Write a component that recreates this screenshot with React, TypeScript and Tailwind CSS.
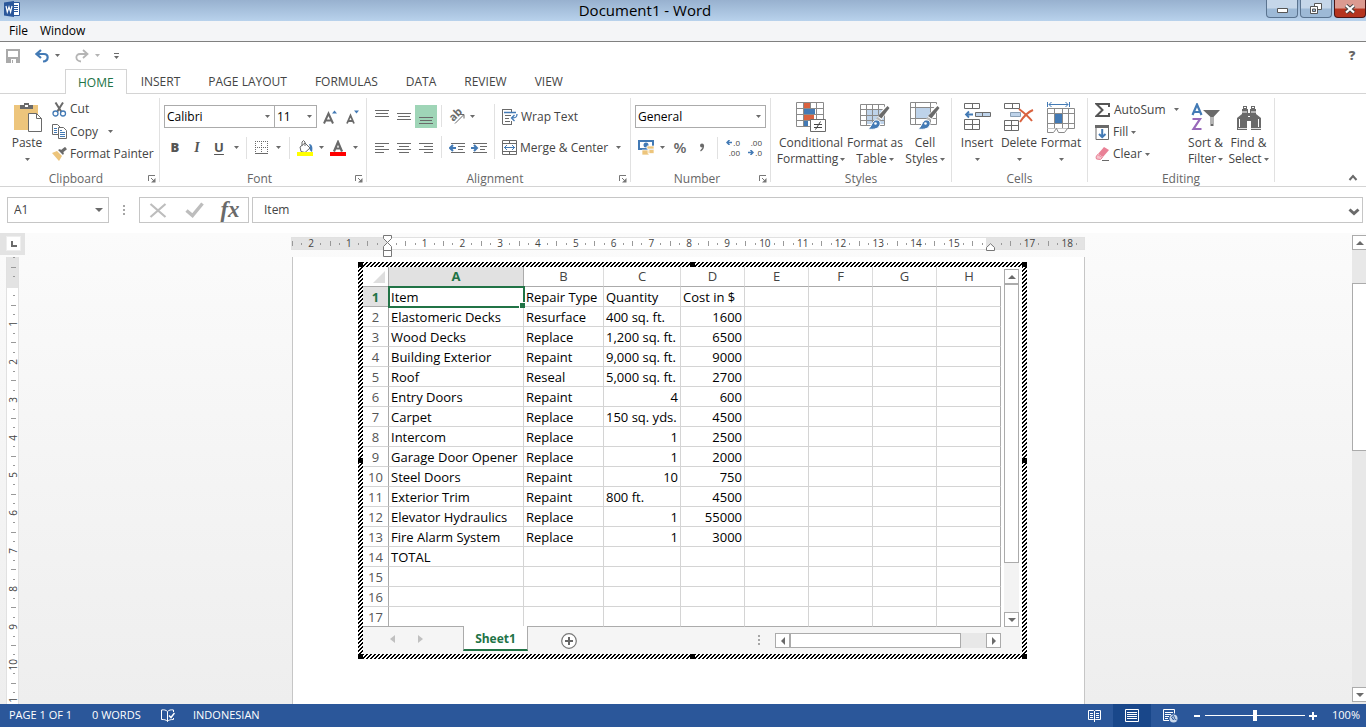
import type { ReactNode } from "react";

const columns = ["A", "B", "C", "D", "E", "F", "G", "H"];

const rows: (string | number)[][] = [
  ["Item", "Repair Type", "Quantity", "Cost in $"],
  ["Elastomeric Decks", "Resurface", "400 sq. ft.", 1600],
  ["Wood Decks", "Replace", "1,200 sq. ft.", 6500],
  ["Building Exterior", "Repaint", "9,000 sq. ft.", 9000],
  ["Roof", "Reseal", "5,000 sq. ft.", 2700],
  ["Entry Doors", "Repaint", 4, 600],
  ["Carpet", "Replace", "150 sq. yds.", 4500],
  ["Intercom", "Replace", 1, 2500],
  ["Garage Door Opener", "Replace", 1, 2000],
  ["Steel Doors", "Repaint", 10, 750],
  ["Exterior Trim", "Repaint", "800 ft.", 4500],
  ["Elevator Hydraulics", "Replace", 1, 55000],
  ["Fire Alarm System", "Replace", 1, 3000],
  ["TOTAL"],
  [],
  [],
  [],
];

const tabs = ["HOME", "INSERT", "PAGE LAYOUT", "FORMULAS", "DATA", "REVIEW", "VIEW"];

function Icon({ w, h, children }: { w: number; h: number; children: ReactNode }) {
  return (
    <svg width={w} height={h} viewBox={`0 0 ${w} ${h}`} fill="none" className="shrink-0" aria-hidden="true">
      {children}
    </svg>
  );
}

function Caret() {
  return (
    <Icon w={5} h={3}>
      <path d="M0 0h5L2.5 3z" fill="#6a6a6a" />
    </Icon>
  );
}

function CaretButton({ label, className }: { label: string; className: string }) {
  return (
    <button type="button" aria-label={label} className={`flex h-[23px] items-center justify-center ${className}`}>
      <Caret />
    </button>
  );
}

function Lines({ items }: { items: [number, number, number][] }) {
  return (
    <Icon w={14} h={14}>
      {items.map(([x, y, w]) => (
        <rect key={y} x={x} y={y} width={w} height={1} fill="#6a6a6a" />
      ))}
    </Icon>
  );
}

function Divider({ className }: { className: string }) {
  return <span className={`w-px shrink-0 bg-[#e1e1e1] ${className}`} />;
}

function Tool({ label, className, children }: { label: string; className: string; children: ReactNode }) {
  return (
    <button type="button" aria-label={label} className={`flex h-[23px] shrink-0 items-center justify-center ${className}`}>
      {children}
    </button>
  );
}

function Group({
  label,
  className,
  launcher,
  children,
}: {
  label: string;
  className: string;
  launcher?: boolean;
  children: ReactNode;
}) {
  return (
    <section className={`flex h-[84px] shrink-0 flex-col border-r border-[#e1e1e1] ${className}`}>
      <div className="flex h-[76px] items-start">{children}</div>
      <div className="flex h-2 items-start text-[#666]">
        <span className={launcher ? "flex-1 pl-1 text-center leading-[10px]" : "flex-1 text-center leading-[10px]"}>{label}</span>
        {launcher && (
          <button type="button" aria-label={`${label} settings`} className="mr-[3px] pt-px">
            <Icon w={8} h={8}>
              <path d="M0.5 6V0.5H7M3 3l3 3" stroke="#777" />
              <path d="M7.500 3v4.500H3z" fill="#777" />
            </Icon>
          </button>
        )}
      </div>
    </section>
  );
}

function BigButton({ icon, lines, caret, className }: { icon: ReactNode; lines: string[]; caret?: boolean; className: string }) {
  return (
    <button type="button" className={`flex shrink-0 flex-col items-center pt-1 whitespace-nowrap ${className}`}>
      <span className="mb-[3px] flex h-[30px] items-center">{icon}</span>
      <span className="leading-4">{lines[0]}</span>
      <span className="flex h-4 items-center gap-[2px] leading-4">
        {lines[1]}
        {caret !== false && <Caret />}
      </span>
    </button>
  );
}

function Combo({ label, value, className }: { label: string; value: string; className: string }) {
  return (
    <span className={`relative flex h-[23px] items-center ${className}`}>
      <select
        aria-label={label}
        defaultValue={value}
        className="h-full w-full appearance-none border border-[#ababab] bg-white pl-[2px] text-black outline-none"
      >
        <option>{value}</option>
      </select>
      <span className="pointer-events-none absolute right-[5px]">
        <Caret />
      </span>
    </span>
  );
}

function Brush() {
  return (
    <>
      <path d="M28.500 3.500l-9 13" stroke="#fff" strokeWidth="5" />
      <path d="M29.500 6l-8 10.500-3.500-2.500 9.500-10z" fill="#6a6a6a" />
      <path d="M17.500 15l3.500 2.500-1.500 2-3.500-2.500z" fill="#b9b9b9" />
      <path d="M14.500 18.500c3-1.500 6.500.5 5.500 4-1 4-5.500 5.500-12 4.500 3-1 3.500-6.500 6.500-8.500z" fill="#437ab5" stroke="#fff" />
      <circle cx="15.500" cy="21.500" r="1.300" fill="#fff" />
    </>
  );
}

function ClipboardGroup() {
  return (
    <Group label="Clipboard" className="w-40" launcher>
      <BigButton
        className="ml-2 w-[38px]"
        lines={["Paste", ""]}
        icon={
          <Icon w={30} h={30}>
            <path d="M2 3h24v25H2z" fill="#edc57c" />
            <path d="M8 7V3h4V1h5v2h4v4z" fill="#6a6a6a" />
            <path d="M13 3h3v2h-3z" fill="#fff" />
            <path d="M16.500 11.500h8l5 5v13h-13z" fill="#fff" stroke="#6a6a6a" />
            <path d="M24.500 11.500v5h5" stroke="#6a6a6a" />
          </Icon>
        }
      />
      <div className="ml-[6px] flex flex-col">
        <button type="button" className="flex h-[22px] items-center gap-[3px]">
          <Icon w={15} h={15}>
            <path d="M3.500 0.500l6 9.500M11 0.500L5 10" stroke="#6a6a6a" strokeWidth="2" />
            <circle cx="3.500" cy="11.500" r="2.500" stroke="#437ab5" strokeWidth="1.300" />
            <circle cx="11" cy="11.500" r="2.500" stroke="#437ab5" strokeWidth="1.300" />
          </Icon>
          Cut
        </button>
        <span className="flex items-center">
          <button type="button" className="flex h-[22px] items-center gap-[3px]">
            <Icon w={15} h={15}>
              <path d="M.5 .5h5l3 3v7h-8z" fill="#fff" stroke="#6a6a6a" />
              <path d="M2 4.500h3M2 6.500h3M2 8.500h3" stroke="#437ab5" />
              <path d="M6.500 3.500h5l3 3v8h-8z" fill="#fff" stroke="#6a6a6a" />
              <path d="M8 8.500h5M8 10.500h5M8 12.500h5M8 6.500h2" stroke="#437ab5" />
            </Icon>
            Copy
          </button>
          <CaretButton label="Copy options" className="ml-1 w-4" />
        </span>
        <button type="button" className="flex h-[22px] items-center gap-[3px] whitespace-nowrap">
          <Icon w={15} h={14}>
            <path d="M0 6l5-2 5 5-3 5z" fill="#edc57c" />
            <path d="M6 3l5 5 1-2-4-4z" fill="#6a6a6a" />
            <path d="M9 5l5-4" stroke="#6a6a6a" strokeWidth="3" />
          </Icon>
          Format Painter
        </button>
      </div>
    </Group>
  );
}

function FontGroup() {
  return (
    <Group label="Font" className="w-[207px]" launcher>
      <div className="flex flex-col gap-2 pt-[7px] pl-1">
        <div className="flex">
          <Combo label="Font name" value="Calibri" className="w-[111px]" />
          <Combo label="Font size" value="11" className="-ml-px w-[43px]" />
          <Tool label="Increase font size" className="w-[26px]">
            <Icon w={15} h={14}>
              <path d="M1 13.500L5.500 3.500 10 13.500M2.500 10.500h6" stroke="#6a6a6a" strokeWidth="2" />
              <path d="M9 3.500L11.500 .5 14 3.500z" fill="#437ab5" />
            </Icon>
          </Tool>
          <Tool label="Decrease font size" className="w-5">
            <Icon w={14} h={14}>
              <path d="M1 13.500l3.500-8 3.500 8M2.500 11h4" stroke="#6a6a6a" strokeWidth="1.800" />
              <path d="M8 .5h5l-2.500 3z" fill="#437ab5" />
            </Icon>
          </Tool>
        </div>
        <div className="flex items-center text-[13px] text-[#555]">
          <Tool label="Bold" className="w-[22px] font-extrabold">
            B
          </Tool>
          <Tool label="Italic" className="w-[22px] font-['Liberation_Serif',serif] text-[14px] font-bold italic">
            I
          </Tool>
          <Tool label="Underline" className="w-[22px] font-bold underline underline-offset-2">
            U
          </Tool>
          <CaretButton label="Underline style" className="w-3" />
          <Divider className="mx-1 h-[22px]" />
          <Tool label="Borders" className="w-5">
            <Icon w={13} h={13}>
              <path d="M0 .5h13M0 6.500h13M.5 0v13M6.500 0v13M12.500 0v13" stroke="#6a6a6a" strokeDasharray="1 1" />
              <path d="M0 12.500h13" stroke="#6a6a6a" />
            </Icon>
          </Tool>
          <CaretButton label="Border style" className="w-[14px]" />
          <Divider className="mx-1 h-[22px]" />
          <Tool label="Fill colour" className="w-[22px]">
            <Icon w={16} h={16}>
              <path d="M3 7l5-4 5 5-5 4.500-4-1z" fill="#fff" stroke="#6a6a6a" />
              <path d="M5 6V2l1.500-1.500L8 2v4" stroke="#6a6a6a" />
              <path d="M12 4c3 0 4 3 3 8-2-1-3-3-2-5z" fill="#437ab5" />
              <path d="M0 12h16v4H0z" fill="#ff0" />
            </Icon>
          </Tool>
          <CaretButton label="Fill colours" className="w-[10px]" />
          <Tool label="Font colour" className="w-6">
            <Icon w={16} h={16}>
              <path d="M4 11.500L8 2l4 9.500M5.500 8.500h5" stroke="#6a6a6a" strokeWidth="2.200" />
              <path d="M0 12h16v4H0z" fill="#f00" />
            </Icon>
          </Tool>
          <CaretButton label="Font colours" className="w-[10px]" />
        </div>
      </div>
    </Group>
  );
}

function AlignmentGroup() {
  return (
    <Group label="Alignment" className="w-[264px]" launcher>
      <div className="flex w-[127px] flex-col gap-2 pt-[7px] pl-1">
        <div className="flex">
          <Tool label="Top align" className="w-[22px]">
            <Lines items={[[0, 0, 14], [1, 3, 12], [0, 6, 14]]} />
          </Tool>
          <Tool label="Middle align" className="w-[22px]">
            <Lines items={[[0, 3, 14], [1, 6, 12], [0, 9, 14]]} />
          </Tool>
          <Tool label="Bottom align" className="w-[22px] bg-[#9fd5b7]">
            <Lines items={[[0, 7, 14], [1, 10, 12], [0, 13, 14]]} />
          </Tool>
          <Divider className="mx-1 h-[22px]" />
          <Tool label="Orientation" className="w-[22px]">
            <Icon w={22} h={22}>
              <text x="10" y="12" textAnchor="middle" transform="rotate(-45 10 9)" fontSize="11" fontWeight="700" fill="#6a6a6a">
                ab
              </text>
              <path d="M9 17.500l8.500-8.500M13.500 8.500h4.500v4" stroke="#6a6a6a" />
            </Icon>
          </Tool>
          <CaretButton label="Orientation options" className="w-2" />
        </div>
        <div className="flex">
          <Tool label="Align left" className="w-[22px]">
            <Lines items={[[0, 2, 14], [0, 5, 9], [0, 8, 14], [0, 11, 9]]} />
          </Tool>
          <Tool label="Center" className="w-[22px]">
            <Lines items={[[0, 2, 14], [2, 5, 10], [0, 8, 14], [2, 11, 10]]} />
          </Tool>
          <Tool label="Align right" className="w-[22px]">
            <Lines items={[[0, 2, 14], [5, 5, 9], [0, 8, 14], [5, 11, 9]]} />
          </Tool>
          <Divider className="mx-1 h-[22px]" />
          <Tool label="Decrease indent" className="w-[22px]">
            <Icon w={16} h={12}>
              <path d="M2 1.500h14M9 4.500h7M9 7.500h5M2 10.500h14" stroke="#6a6a6a" />
              <path d="M7 6H1.500M4 3L1 6l3 3" stroke="#437ab5" strokeWidth="2" />
            </Icon>
          </Tool>
          <Tool label="Increase indent" className="w-[22px]">
            <Icon w={16} h={12}>
              <path d="M2 1.500h14M9 4.500h7M9 7.500h5M2 10.500h14" stroke="#6a6a6a" />
              <path d="M0 6h5.500M3 3l3 3-3 3" stroke="#437ab5" strokeWidth="2" />
            </Icon>
          </Tool>
        </div>
      </div>
      <Divider className="mt-[6px] h-[55px]" />
      <div className="flex flex-col gap-2 pt-[7px] pl-[7px]">
        <button type="button" className="flex h-[23px] items-center gap-[3px]">
          <Icon w={16} h={16}>
            <path d="M.5 0v15M.5 .5h9M.5 15.500h9M9.500 0v3M9.500 12v4" stroke="#6a6a6a" />
            <path d="M3 6.500h6M3 9.500h4M3 12.500h5" stroke="#6a6a6a" />
            <path d="M2 3.500h12M15 5c0 3-1 4-5 4M12.500 6L9.500 9l3 3" stroke="#437ab5" strokeWidth="1.300" />
          </Icon>
          Wrap Text
        </button>
        <span className="flex items-center">
          <button type="button" className="flex h-[23px] items-center gap-[3px] whitespace-nowrap">
            <Icon w={15} h={15}>
              <path d="M.5 .5h14v14H.5zM0 3.500h15M0 11.500h15M7.500 0v3.500M7.500 11.500v3.500" stroke="#6a6a6a" />
              <path d="M2 7.500h11M5 5L2.500 7.500 5 10M10 5l2.500 2.500L10 10" stroke="#437ab5" />
            </Icon>
            Merge &amp; Center
          </button>
          <CaretButton label="Merge options" className="ml-[2px] w-4" />
        </span>
      </div>
    </Group>
  );
}

function NumberGroup() {
  return (
    <Group label="Number" className="w-[140px]" launcher>
      <div className="flex flex-col gap-2 pt-[7px] pl-1">
        <Combo label="Number format" value="General" className="w-[131px]" />
        <div className="flex items-center">
          <Tool label="Accounting format" className="w-[22px]">
            <Icon w={17} h={16}>
              <path d="M0 0h16v10H0z" fill="#437ab5" />
              <path d="M2 2h12v6H2z" fill="#fff" />
              <circle cx="8" cy="5" r="2.500" fill="#437ab5" />
              <path d="M9 6h7v3H9zM4 10h7v5H4zM10 9.500h6v4h-6z" fill="#edc57c" stroke="#fff" strokeWidth=".7" />
            </Icon>
          </Tool>
          <CaretButton label="Accounting options" className="w-[10px]" />
          <Tool label="Percent style" className="w-[26px] text-[15px] font-semibold text-[#666]">
            %
          </Tool>
          <Tool label="Comma style" className="w-[18px]">
            <Icon w={6} h={9}>
              <circle cx="3" cy="2.500" r="2" fill="#6a6a6a" />
              <path d="M4.500 2.500Q4.500 6 1.500 8" stroke="#6a6a6a" strokeWidth="1.300" />
            </Icon>
          </Tool>
          <Divider className="mr-1 ml-[6px] h-[22px]" />
          <button type="button" aria-label="Increase decimal" className="flex w-[22px] flex-col items-end pr-1 text-[8px] leading-[10px]">
            <span className="flex items-center gap-px">
              <Icon w={6} h={5}>
                <path d="M6 2.500H1.500M3.500 0L1 2.500 3.500 5" stroke="#437ab5" strokeWidth="1.500" />
              </Icon>
              .0
            </span>
            <span>.00</span>
          </button>
          <button type="button" aria-label="Decrease decimal" className="flex w-[22px] flex-col items-end pr-1 text-[8px] leading-[10px]">
            <span>.00</span>
            <span className="flex items-center gap-px">
              <Icon w={6} h={5}>
                <path d="M0 2.500h5M2.500 0L5 2.500 2.500 5" stroke="#437ab5" strokeWidth="1.500" />
              </Icon>
              .0
            </span>
          </button>
        </div>
      </div>
    </Group>
  );
}

function StylesGroup() {
  return (
    <Group label="Styles" className="w-[181px]">
      <BigButton
        className="ml-1 w-[72px]"
        lines={["Conditional", "Formatting"]}
        icon={
          <Icon w={30} h={30}>
            <path d="M.5 .5h27v24H.5zM.5 6.500h27M.5 12.500h27M.5 18.500h27M7.500 .5v24M20.500 .5v24M14.500 .5v24" stroke="#8a8a8a" />
            <path d="M8 1h6v5H8zM8 13h10v5H8z" fill="#d9623f" />
            <path d="M8 7h11v5H8zM8 19h4v5H8z" fill="#437ab5" />
            <path d="M14.500 17.500h15v12h-15z" fill="#fff" stroke="#6a6a6a" />
            <path d="M18 22.500h8M18 25.500h8M24.500 19.500l-5 8" stroke="#444" />
          </Icon>
        }
      />
      <BigButton
        className="w-14"
        lines={["Format as", "Table"]}
        icon={
          <Icon w={30} h={30}>
            <path d="M6 8h18v14H6z" fill="#bed3ea" />
            <path d="M.5 2.500h24v21H.5zM.5 7.500h24M.5 13.500h24M.5 18.500h24M6.500 2.500v21M12.500 2.500v21M18.500 2.500v21" stroke="#8a8a8a" />
            <Brush />
          </Icon>
        }
      />
      <BigButton
        className="w-11"
        lines={["Cell", "Styles"]}
        icon={
          <Icon w={30} h={30}>
            <path d="M.5 .5h26v22H.5zM.5 5.500h26M.5 16.500h26M5.500 .5v22M20.500 .5v22" stroke="#8a8a8a" />
            <path d="M6 6h14v10H6z" fill="#bed3ea" />
            <Brush />
          </Icon>
        }
      />
    </Group>
  );
}

function CellsGroup() {
  return (
    <Group label="Cells" className="w-[136px]">
      <BigButton
        className="ml-1 w-[42px]"
        lines={["Insert", ""]}
        icon={
          <Icon w={27} h={30}>
            <path d="M.5 1.500h15v5H.5zM8.500 1.500v5M.5 17.500h15v10H.5zM.5 22.500h15M8.500 17.500v10" stroke="#6a6a6a" />
            <path d="M11.500 10.500h15v4h-15z" fill="#bed3ea" stroke="#6a6a6a" />
            <path d="M18.500 10.500v4" stroke="#6a6a6a" />
            <path d="M9 12.500H2M5 9.500l-3 3 3 3" stroke="#437ab5" strokeWidth="1.800" />
          </Icon>
        }
      />
      <BigButton
        className="w-[42px]"
        lines={["Delete", ""]}
        icon={
          <Icon w={30} h={30}>
            <path d="M.5 1.500h15v5H.5zM8.500 1.500v5M.5 18.500h14v10H.5zM.5 23.500h14M7.500 18.500v10" stroke="#6a6a6a" />
            <path d="M6.500 10.500h10v4h-10z" fill="#bed3ea" stroke="#8a9fb5" />
            <path d="M15 7c4 3 9 7 13 12M29 8c-5 2-9 6-13 12" stroke="#d9623f" strokeWidth="2" />
          </Icon>
        }
      />
      <BigButton
        className="w-[42px]"
        lines={["Format", ""]}
        icon={
          <Icon w={28} h={31}>
            <path d="M.5 0v5M22.500 0v5M2 2.500h19M4.500 0L2 2.500 4.500 5M18.500 0L21 2.500 18.500 5" stroke="#437ab5" />
            <path d="M.5 6.500h27v20H.5zM.5 11.500h27M.5 21.500h27M7.500 6.500v20M15.500 6.500v20M21.500 6.500v20" stroke="#8a8a8a" />
            <path d="M8 12h7v9H8z" fill="#437ab5" />
            <path d="M.5 26.500v4h6l3-4 2 4h6l3-4" stroke="#8a8a8a" fill="#fff" />
          </Icon>
        }
      />
    </Group>
  );
}

function EditingGroup() {
  return (
    <Group label="Editing" className="w-[187px]">
      <div className="flex w-24 flex-col pl-[7px]">
        <span className="flex items-center justify-between">
          <button type="button" className="flex h-[22px] items-center gap-1">
            <Icon w={15} h={14}>
              <path d="M14 4V1H1.500l6 6-6 6H14v-3" stroke="#555" strokeWidth="2" />
            </Icon>
            AutoSum
          </button>
          <CaretButton label="AutoSum options" className="w-4" />
        </span>
        <button type="button" className="flex h-[22px] items-center gap-[3px]">
          <Icon w={15} h={15}>
            <path d="M1 2h12.500v12.500H1z" fill="#fff" stroke="#6a6a6a" />
            <path d="M0 0h14v3H0z" fill="#6a6a6a" />
            <path d="M7.200 4v8M4 9l3.200 3.200L10.500 9" stroke="#437ab5" strokeWidth="2" />
          </Icon>
          Fill
          <Caret />
        </button>
        <button type="button" className="flex h-[22px] items-center gap-[3px]">
          <Icon w={15} h={14}>
            <path d="M9 0l5 3-6 7-5-3z" fill="#e98196" />
            <path d="M2.500 7.500l5 3-2 2-4-.5-.5-2z" fill="#f6c3cc" stroke="#e98196" />
            <path d="M7 13.500h7" stroke="#6a6a6a" />
          </Icon>
          Clear
          <Caret />
        </button>
      </div>
      <BigButton
        className="w-[43px]"
        lines={["Sort &", "Filter"]}
        icon={
          <Icon w={29} h={28}>
            <path d="M1.500 12L6 1.500 10.500 12M3 9h6" stroke="#437ab5" strokeWidth="2.200" />
            <path d="M1.500 16h7.500L2.500 26H10.500" stroke="#9868b9" strokeWidth="2.200" />
            <path d="M12 7h17l-6.500 7v9h-3v-9z" fill="#6a6a6a" />
            <path d="M21 14v7" stroke="#fff" />
          </Icon>
        }
      />
      <BigButton
        className="w-[43px]"
        lines={["Find &", "Select"]}
        icon={
          <Icon w={26} h={26}>
            <path d="M7 2h4v3h1v4h2V5h1V2h4v3h1v5l5 4v12H15v-9h-4v9H1V14l5-4V5h1z" fill="#6a6a6a" />
            <path d="M8 3.500h2M16 3.500h2M6 8h5M15 8h5M3.500 15v8M22.500 15v8M12 12.500h2" stroke="#fff" />
            <path d="M2 24.500h9M15 24.500h10" stroke="#fff" strokeWidth=".8" />
          </Icon>
        }
      />
    </Group>
  );
}

function WindowButton({ label, className, children }: { label: string; className: string; children: ReactNode }) {
  return (
    <button
      type="button"
      aria-label={label}
      className={`flex h-[18px] w-8 items-center justify-center rounded-b-sm border border-t-0 ${className}`}
    >
      {children}
    </button>
  );
}

function TitleBar() {
  return (
    <header className="flex h-[21px] shrink-0 items-start bg-linear-to-b from-[#98b1cf] to-[#b8d2ec] pl-1">
      <Icon w={16} h={17}>
        <path d="M8.500 2.500h7v13h-7z" fill="#fff" stroke="#2b579a" />
        <path d="M10 5.500h4M10 7.500h4M10 9.500h4M10 11.500h4" stroke="#2b579a" />
        <path d="M0 2.500L10 1v16L0 15.500z" fill="#2b579a" />
        <path d="M2 6l1.300 6L5 7l1.600 5L8 6" stroke="#fff" strokeWidth="1.200" />
      </Icon>
      <h1 className="flex-1 pl-1 text-center text-[15px] leading-5 text-black">Document1 - Word</h1>
      <div className="flex gap-[2px]">
        <WindowButton label="Minimize" className="border-[#5a738f] bg-linear-to-b from-[#c5d6e9] from-45% to-[#9db9d6] to-55%">
          <span className="pt-1">
            <Icon w={11} h={5}>
              <path d="M.5 .5h10v4H.5z" fill="#fff" stroke="#555" />
            </Icon>
          </span>
        </WindowButton>
        <WindowButton label="Restore" className="border-[#5a738f] bg-linear-to-b from-[#c5d6e9] from-45% to-[#9db9d6] to-55%">
          <Icon w={12} h={11}>
            <path d="M4.500 .5h7v6h-7z" fill="#fff" stroke="#555" />
            <path d="M.5 3.500h7v7h-7z" fill="#fff" stroke="#555" />
            <path d="M2.500 6h3v2.500h-3z" fill="#9db9d6" stroke="#555" />
          </Icon>
        </WindowButton>
        <WindowButton label="Close" className="border-[#4a1414] bg-linear-to-b from-[#dc9a90] from-45% to-[#b5341f] to-55%">
          <Icon w={12} h={10}>
            <path d="M2 1.500l8 7M10 1.500l-8 7" stroke="#444" strokeWidth="4" />
            <path d="M2 1.500l8 7M10 1.500l-8 7" stroke="#fff" strokeWidth="2.200" />
          </Icon>
        </WindowButton>
      </div>
    </header>
  );
}

function QuickAccess() {
  return (
    <div className="flex h-[27px] shrink-0 items-center pl-[6px]">
      <Tool label="Save" className="w-[14px]">
        <Icon w={14} h={14}>
          <path d="M1 1h12v12H1z" stroke="#aaa" strokeWidth="2" />
          <path d="M1 8h12v5H1z" fill="#aaa" />
          <path d="M5 10h5v4H5z" fill="#fff" />
          <path d="M6 11h1v3H6z" fill="#aaa" />
        </Icon>
      </Tool>
      <Tool label="Undo" className="ml-[15px] w-[14px]">
        <Icon w={14} h={14}>
          <path d="M6 1L1.500 5 6 9M2 5h7c5 0 5 7-1 7.500" stroke="#437ab5" strokeWidth="2.200" />
        </Icon>
      </Tool>
      <CaretButton label="Undo history" className="w-4" />
      <Tool label="Redo" className="ml-[10px] w-[14px]">
        <Icon w={14} h={14}>
          <path d="M8 1l4.500 4L8 9M12 5H5c-5 0-5 7 1 7.500" stroke="#b5b5b5" strokeWidth="1.800" />
        </Icon>
      </Tool>
      <CaretButton label="Redo history" className="w-4 opacity-50" />
      <Tool label="Customize toolbar" className="w-[22px]">
        <Icon w={5} h={6}>
          <path d="M0 .5h5" stroke="#6a6a6a" />
          <path d="M0 3h5L2.500 6z" fill="#6a6a6a" />
        </Icon>
      </Tool>
      <Tool label="Help" className="mr-2 ml-auto w-3 text-[13px] font-extrabold text-[#666]">
        ?
      </Tool>
    </div>
  );
}

function FormulaBar() {
  return (
    <div className="flex h-[46px] shrink-0 items-center pr-[3px] pl-[7px] text-[#444]">
      <span className="flex h-[26px] w-[102px] items-center border border-[#c6c6c6] pr-[5px]">
        <input aria-label="Name box" defaultValue="A1" className="w-full min-w-0 flex-1 pl-[6px] outline-none" />
        <Icon w={8} h={4}>
          <path d="M0 0h8L4 4z" fill="#6a6a6a" />
        </Icon>
      </span>
      <span className="flex w-[30px] justify-center">
        <Icon w={2} h={10}>
          <path d="M0 0h2v2H0zM0 4h2v2H0zM0 8h2v2H0z" fill="#a6a6a6" />
        </Icon>
      </span>
      <span className="mr-[3px] flex h-[26px] w-[110px] items-center justify-around border border-[#c6c6c6]">
        <Tool label="Cancel" className="w-8">
          <Icon w={18} h={15}>
            <path d="M1.500 1l15 13M16.500 1l-15 13" stroke="#bdbdbd" strokeWidth="2.200" />
          </Icon>
        </Tool>
        <Tool label="Enter" className="w-8">
          <Icon w={19} h={16}>
            <path d="M1.500 8.500l6 5L17.500 1.500" stroke="#bdbdbd" strokeWidth="3.400" />
          </Icon>
        </Tool>
        <Tool label="Insert function" className="w-8 font-['Liberation_Serif',serif] text-[23px] font-bold text-[#6a6a6a] italic">
          fx
        </Tool>
      </span>
      <span className="flex h-[26px] flex-1 items-center border border-[#c6c6c6] pr-[2px]">
        <input aria-label="Formula" defaultValue="Item" className="flex-1 pl-[11px] outline-none" />
        <button type="button" aria-label="Expand formula bar" className="pt-[3px]">
          <Icon w={12} h={8}>
            <path d="M1.500 1.500L6 5.500l4.500-4" stroke="#6a6a6a" strokeWidth="3" />
          </Icon>
        </button>
      </span>
    </div>
  );
}

// Four marks to the centimetre: half tick, dot, number, dot.
function rulerMark(i: number, first: number) {
  if (i % 4 === 0) return "tick";
  if (i % 4 === 2) return Math.abs(first + Math.floor(i / 4));
  return "dot";
}

function HorizontalRuler() {
  return (
    <div className="relative flex h-6 justify-center pt-1 pr-[2px]">
      <div className="h-[13px] w-[794px] overflow-hidden border border-[#e1e1e1] bg-[linear-gradient(to_right,#e3e3e3_96px,#fff_96px,#fff_694px,#e3e3e3_694px)]">
        <div className="-ml-1 grid h-[11px] w-[794px] grid-cols-[repeat(84,minmax(0,1fr))] text-[10px] leading-[11px] text-[#444]">
          {Array.from({ length: 84 }, (_, i) => {
            const mark = rulerMark(i, -2);
            return (
              <span key={i} className="flex items-center justify-center">
                {mark === "tick" && <span className="h-[5px] w-px bg-[#999]" />}
                {mark === "dot" && <span className="h-[2px] w-px bg-[#999]" />}
                {typeof mark === "number" && mark !== 0 && mark !== 16 && mark}
              </span>
            );
          })}
        </div>
      </div>
      <div className="absolute inset-x-0 top-[2px] mx-auto flex w-[794px] justify-between px-[91px]">
        <Icon w={9} h={22}>
          <path d="M.5 .5h8v3l-4 4 4 4v4h-8v-4l4-4-4-4zM.5 15.500h8v6h-8z" fill="#fff" stroke="#777" />
        </Icon>
        <span className="pt-2">
          <Icon w={9} h={8}>
            <path d="M4.500 .7l4 3.800v3h-8v-3z" fill="#fff" stroke="#777" />
          </Icon>
        </span>
      </div>
    </div>
  );
}

function VerticalRuler() {
  return (
    <div className="ml-[6px] min-h-0 w-[13px] flex-1 overflow-hidden border-x border-[#e1e1e1] bg-[linear-gradient(to_bottom,#e3e3e3_31px,#fff_31px)]">
      <div className="-mt-1 grid h-[454px] grid-rows-[repeat(48,minmax(0,1fr))] pl-[2px] text-[10px] leading-[9px] text-[#444]">
        {Array.from({ length: 48 }, (_, i) => {
          const mark = rulerMark(i + 3, -1);
          return (
            <span key={i} className="flex items-center justify-center">
              {mark === "tick" && <span className="h-px w-[5px] bg-[#999]" />}
              {mark === "dot" && <span className="h-px w-[2px] bg-[#999]" />}
              {typeof mark === "number" && mark !== 0 && (
                <span className="rotate-180 [writing-mode:vertical-rl]">{mark}</span>
              )}
            </span>
          );
        })}
      </div>
    </div>
  );
}

function ScrollButton({ label, d, className }: { label: string; d: string; className?: string }) {
  return (
    <button
      type="button"
      aria-label={label}
      className={`flex size-[15px] shrink-0 items-center justify-center border border-[#ababab] bg-white ${className ?? ""}`}
    >
      <Icon w={8} h={8}>
        <path d={d} fill="#6a6a6a" />
      </Icon>
    </button>
  );
}

const up = "M0 6h8L4 2z";
const down = "M0 2h8L4 6z";
const left = "M6 0v8L2 4z";
const right = "M2 0v8l4-4z";

function SheetTable() {
  return (
    <table className="w-[638px] table-fixed border-separate border-spacing-0 bg-white text-[13px] text-black">
      <colgroup>
        <col className="w-[26px]" />
        <col className="w-[135px]" />
        <col className="w-20" />
        <col className="w-[77px]" />
        {columns.slice(3).map((c) => (
          <col key={c} className="w-16" />
        ))}
      </colgroup>
      <thead>
        <tr className="h-5 leading-[19px] text-[#444]">
          <th className="border-r border-b border-[#ababab] p-0">
            <span className="flex justify-end pr-[3px]">
              <Icon w={12} h={12}>
                <path d="M12 0v12H0z" fill="#dedede" />
              </Icon>
            </span>
          </th>
          {columns.map((c, i) => (
            <th
              key={c}
              scope="col"
              className={
                i === 0
                  ? "border-r border-b border-r-[#ababab] border-b-[#217346] bg-[#e1e1e1] p-0 font-bold text-[#217346]"
                  : "border-r border-b border-r-[#dcdcdc] border-b-[#ababab] p-0 font-normal last:border-r-0"
              }
            >
              {c}
            </th>
          ))}
        </tr>
      </thead>
      <tbody>
        {rows.map((row, r) => (
          <tr key={r} className="group h-5 leading-[17px]">
            <th
              scope="row"
              className={
                r === 0
                  ? "border-r border-b border-[#ababab] bg-[#e1e1e1] px-0 pt-[2px] pb-0 font-bold text-[#217346]"
                  : "border-r border-b border-r-[#ababab] border-b-[#d4d4d4] px-0 pt-[2px] pb-0 font-medium text-[#555] group-last:border-b-[#ababab]"
              }
            >
              {r + 1}
            </th>
            {columns.map((c, i) => (
              <td
                key={c}
                className={`border-r border-b border-[#d4d4d4] px-[2px] pt-[2px] pb-0 whitespace-nowrap group-last:border-b-[#ababab] last:border-r-[#ababab] ${
                  typeof row[i] === "number" ? "text-right" : "text-left"
                } ${r === 0 && i === 0 ? "relative outline-2 -outline-offset-1 outline-[#217346]" : ""}`}
              >
                {row[i]}
                {r === 0 && i === 0 && (
                  <span className="absolute -right-[2px] -bottom-[2px] size-[6px] border-t border-l border-white bg-[#217346]" />
                )}
              </td>
            ))}
          </tr>
        ))}
      </tbody>
    </table>
  );
}

function EmbeddedSheet() {
  return (
    <div className="relative mt-[5px] ml-[65px] w-[669px] bg-[linear-gradient(135deg,#000_25%,#fff_25%,#fff_50%,#000_50%,#000_75%,#fff_75%)] bg-[length:4px_4px] p-[5px]">
      <div className="pointer-events-none absolute inset-0 grid grid-cols-3 grid-rows-3">
        <span className="size-[5px] bg-black" />
        <span className="size-[5px] justify-self-center bg-black" />
        <span className="size-[5px] justify-self-end bg-black" />
        <span className="size-[5px] self-center bg-black" />
        <span />
        <span className="size-[5px] self-center justify-self-end bg-black" />
        <span className="size-[5px] self-end bg-black" />
        <span className="size-[5px] self-end justify-self-center bg-black" />
        <span className="size-[5px] self-end justify-self-end bg-black" />
      </div>
      <div className="flex bg-white">
        <SheetTable />
        <div className="mt-[2px] ml-[3px] flex w-[15px] flex-col bg-[#f3f3f3]">
          <ScrollButton label="Scroll up" d={up} />
          <div className="h-[279px] border border-[#ababab] bg-white" />
          <ScrollButton label="Scroll down" d={down} className="mt-auto" />
        </div>
      </div>
      <div className="flex h-[27px] items-start bg-[#f5f5f5] pr-[21px]">
        <Tool label="Previous sheet" className="ml-[17px] w-6">
          <Icon w={5} h={8}>
            <path d="M5 0v8L0 4z" fill="#c0c0c0" />
          </Icon>
        </Tool>
        <Tool label="Next sheet" className="ml-1 w-6">
          <Icon w={5} h={8}>
            <path d="M0 0v8l5-4z" fill="#c0c0c0" />
          </Icon>
        </Tool>
        <button
          type="button"
          className="-mt-px ml-[31px] h-[25px] w-[65px] border-x border-b-2 border-x-[#ababab] border-b-[#217346] bg-white pt-[3px] font-bold text-[#217346]"
        >
          Sheet1
        </button>
        <Tool label="New sheet" className="ml-[29px] w-6 pt-1">
          <Icon w={16} h={16}>
            <circle cx="8" cy="8" r="7.300" stroke="#777" strokeWidth="1.200" fill="#fff" />
            <path d="M4 8h8M8 4v8" stroke="#666" strokeWidth="2" />
          </Icon>
        </Tool>
        <span className="mr-[15px] ml-auto pt-2">
          <Icon w={2} h={10}>
            <path d="M0 0h2v2H0zM0 4h2v2H0zM0 8h2v2H0z" fill="#a6a6a6" />
          </Icon>
        </span>
        <div className="mt-[6px] flex w-[226px] bg-[#e8e8e8]">
          <ScrollButton label="Scroll left" d={left} />
          <div className="h-[15px] w-[171px] border border-[#ababab] bg-white" />
          <ScrollButton label="Scroll right" d={right} className="ml-auto" />
        </div>
      </div>
    </div>
  );
}

function Workspace() {
  return (
    <main className="flex min-h-0 flex-1 bg-linear-to-b from-[#fbfbfb] to-[#eee]">
      <div className="flex w-[25px] shrink-0 flex-col">
        <div className="mb-[2px] h-[22px] bg-[#e3e3e3] pt-[3px] pl-[6px]">
          <button type="button" aria-label="Tab stop" className="flex size-[15px] items-center justify-center border border-[#eee] bg-white">
            <Icon w={6} h={6}>
              <path d="M1 0v5h5" stroke="#6a6a6a" strokeWidth="2" />
            </Icon>
          </button>
        </div>
        <VerticalRuler />
      </div>
      <div className="flex min-w-0 flex-1 flex-col overflow-hidden">
        <HorizontalRuler />
        <div className="mx-auto min-h-0 w-[793px] flex-1 border-x border-[#c6c6c6] bg-white">
          <EmbeddedSheet />
        </div>
      </div>
      <div className="mt-[2px] flex w-[14px] shrink-0 flex-col overflow-hidden bg-[#e8e8e8] pb-[2px]">
        <ScrollButton label="Page up" d={up} />
        <div className="mt-[33px] h-[168px] w-[15px] border border-[#ababab] bg-white" />
        <ScrollButton label="Page down" d={down} className="mt-auto" />
      </div>
    </main>
  );
}

function StatusBar() {
  return (
    <footer className="flex h-[23px] shrink-0 items-center bg-[#2b579a] pr-[6px] pl-[9px] text-[11px] text-white">
      <span className="w-[83px]">PAGE 1 OF 1</span>
      <span className="w-[69px]">0 WORDS</span>
      <Tool label="Proofing" className="mr-[18px] w-[14px]">
        <Icon w={14} h={13}>
          <path d="M6.500 2.500C5 1 3 .5.500 1v9.500c2.500 0 4.500 0 6 2V2.500C8 1 10 .5 12.500 1v2M6.500 12.500c1-1.500 3-2 6-2V9" stroke="#fff" />
          <path d="M8 6.500l2 2L13.500 4" stroke="#fff" strokeWidth="1.500" />
        </Icon>
      </Tool>
      <button type="button">INDONESIAN</button>
      <Tool label="Read mode" className="ml-auto w-[38px]">
        <Icon w={13} h={13}>
          <path d="M.5 1.500h5l1 1 1-1h5v9h-5l-1 1-1-1h-5zM6.500 2v11M2 4.500h3M2 6.500h3M2 8.500h3M8 4.500h3M8 6.500h3M8 8.500h3" stroke="#fff" />
        </Icon>
      </Tool>
      <Tool label="Print layout" className="w-[38px] bg-[#19478a]">
        <Icon w={14} h={13}>
          <path d="M.5 .5h13v12H.5zM2 3.500h10M2 5.500h10M2 7.500h10M2 9.500h10" stroke="#fff" />
        </Icon>
      </Tool>
      <Tool label="Web layout" className="w-[38px]">
        <Icon w={15} h={14}>
          <path d="M6 11.500H.5V.5h11v4M2 3.500h8M2 5.500h6M2 7.500h4M2 9.500h3" stroke="#fff" />
          <circle cx="10.500" cy="9.500" r="4" fill="#c9d7ea" />
          <path d="M8.500 8l2-1.500 1 2.500-1 2zM12 10l1.500 1" stroke="#2b579a" />
        </Icon>
      </Tool>
      <Tool label="Zoom out" className="w-4">
        <Icon w={6} h={2}>
          <path d="M0 0h6v2H0z" fill="#fff" />
        </Icon>
      </Tool>
      <input
        type="range"
        aria-label="Zoom"
        defaultValue={50}
        className="h-3 w-[100px] appearance-none bg-[linear-gradient(#fff,#fff)] bg-[length:100%_1px] bg-center bg-no-repeat [&::-webkit-slider-thumb]:h-[11px] [&::-webkit-slider-thumb]:w-1 [&::-webkit-slider-thumb]:appearance-none [&::-webkit-slider-thumb]:bg-white"
      />
      <Tool label="Zoom in" className="w-4">
        <Icon w={8} h={8}>
          <path d="M0 4h8M4 0v8" stroke="#fff" strokeWidth="2" />
        </Icon>
      </Tool>
      <span className="w-[39px] text-right">100%</span>
    </footer>
  );
}

export default function App() {
  return (
    <div className="flex h-screen flex-col overflow-hidden bg-white font-['Open_Sans','Noto_Sans',sans-serif] text-[12px] text-[#444]">
      <TitleBar />
      <nav className="flex h-[21px] shrink-0 items-center gap-3 border-b border-[#808080] bg-[#f4f5f7] pl-[9px] text-black">
        <button type="button">File</button>
        <button type="button">Window</button>
      </nav>
      <QuickAccess />
      <div className="flex h-[25px] shrink-0 items-stretch border-b border-[#d4d4d4] pl-[65px]">
        {tabs.map((tab) => (
          <button
            key={tab}
            type="button"
            className={
              tab === "HOME"
                ? "-mb-px border border-b-0 border-[#d4d4d4] bg-white px-3 pt-px text-[#217346]"
                : "px-[14px] pt-[2px] whitespace-nowrap"
            }
          >
            {tab}
          </button>
        ))}
      </div>
      <div className="flex shrink-0 border-b border-[#d4d4d4] py-1">
        <ClipboardGroup />
        <FontGroup />
        <AlignmentGroup />
        <NumberGroup />
        <StylesGroup />
        <CellsGroup />
        <EditingGroup />
        <button type="button" aria-label="Collapse ribbon" className="mr-2 ml-auto self-end">
          <Icon w={10} h={8}>
            <path d="M1.500 6L5 2l3.500 4" stroke="#6a6a6a" strokeWidth="2" />
          </Icon>
        </button>
      </div>
      <FormulaBar />
      <Workspace />
      <StatusBar />
    </div>
  );
}
